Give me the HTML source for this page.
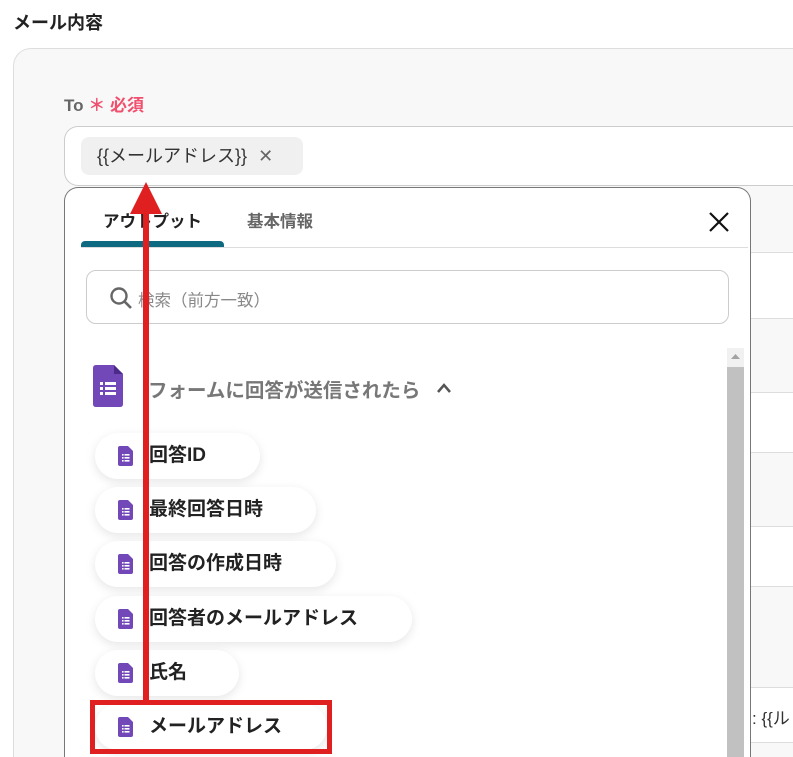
<!DOCTYPE html><html style="height:757px;overflow:hidden"><head><meta charset="utf-8"><style>
body{margin:0;width:793px;height:757px;overflow:hidden;background:#fff;font-family:"Liberation Sans","Noto Sans CJK JP",sans-serif;position:relative}
.a{position:absolute}
.pill{position:absolute;left:95px;height:46px;border-radius:23px;background:#fff;box-shadow:0 3px 10px rgba(0,0,0,.10);font-weight:bold;font-size:19px;color:#222;line-height:46px;padding-left:54px;box-sizing:border-box;white-space:nowrap}
.pill svg{position:absolute;left:23px;top:13px}
.row{position:absolute;left:750px;width:43px;border-top:1px solid #ddd}
</style></head><body>
<div class="a" style="left:13px;top:9px;font-weight:bold;font-size:18px;color:#222">メール内容</div>
<div class="a" style="left:13px;top:48px;width:780px;height:709px;border:1px solid #ddd;border-bottom:none;border-right:none;border-radius:18px 0 0 0;background:#f8f8f9;box-sizing:border-box"></div>
<div class="a" style="left:64px;top:91px;font-weight:bold;font-size:17px;color:#666">To <span style="color:#f0506e">＊ 必須</span></div>
<div class="a" style="left:64px;top:126px;width:729px;height:60px;border:1px solid #ccc;border-right:none;border-radius:14px 0 0 14px;background:#fff;box-sizing:border-box"></div>
<div class="a" style="left:81px;top:137px;width:222px;height:38px;border-radius:8px;background:#f0f0f0;font-size:18px;color:#333;line-height:38px;padding-left:16px;box-sizing:border-box;white-space:nowrap">{{メールアドレス}} <span style="color:#666;margin-left:6px">✕</span></div>
<div class="row" style="top:252px;height:66px;background:#fff"></div>
<div class="row" style="top:318px;height:74px;background:#f8f8f9"></div>
<div class="row" style="top:392px;height:60px;background:#fff"></div>
<div class="row" style="top:452px;height:74px;background:#f8f8f9"></div>
<div class="row" style="top:526px;height:60px;background:#fff"></div>
<div class="row" style="top:586px;height:100px;background:#f8f8f9"></div>
<div class="row" style="top:687px;height:55px;background:#fff"></div>
<div class="row" style="top:742px;height:14px;background:#f8f8f9"></div>
<div class="a" style="left:752px;top:704px;font-size:17px;color:#333">: {{ル</div>
<div class="a" style="left:64px;top:187px;width:687px;height:570px;border:1px solid #777;border-bottom:none;border-radius:14px 14px 0 0;background:#fff;box-sizing:border-box"></div>
<div class="a" style="left:103px;top:208px;font-weight:bold;font-size:16.5px;color:#222">アウトプット</div>
<div class="a" style="left:247px;top:208px;font-weight:bold;font-size:16.5px;color:#666">基本情報</div>
<div class="a" style="left:81px;top:247px;width:667px;border-top:1px solid #ddd"></div>
<div class="a" style="left:81px;top:241px;width:143px;height:6px;background:#0e6a80;border-radius:4px 4px 0 0"></div>
<svg class="a" style="left:707px;top:210px" width="24" height="24"><path d="M3 3L21 21M21 3L3 21" stroke="#111" stroke-width="2.2"/></svg>
<div class="a" style="left:86px;top:270px;width:643px;height:54px;border:1px solid #ccc;border-radius:10px;box-sizing:border-box"></div>
<svg class="a" style="left:109px;top:286px" width="24" height="24"><circle cx="10" cy="10" r="7.5" stroke="#666" stroke-width="2.4" fill="none"/><path d="M15.5 15.5L22 22" stroke="#666" stroke-width="2.6"/></svg>
<div class="a" style="left:138px;top:287px;font-size:16.5px;color:#888">検索（前方一致）</div>
<div class="a" style="left:727px;top:348px;width:17px;height:409px;background:#f1f1f1"></div>
<div class="a" style="left:727px;top:367px;width:17px;height:390px;background:#c1c1c1"></div>
<svg class="a" style="left:731px;top:354px" width="9" height="6"><path d="M0 5L4.5 0L9 5Z" fill="#a3a3a3"/></svg>
<svg class="a" style="left:93px;top:365px" width="30" height="42"><path d="M3 0H21L30 9V39Q30 42 27 42H3Q0 42 0 39V3Q0 0 3 0Z" fill="#7248b9"/><path d="M21 0V9H30Z" fill="#4b2a8a"/><g fill="#fff"><rect x="7" y="17" width="3" height="3"/><rect x="12" y="17" width="11" height="3"/><rect x="7" y="22" width="3" height="3"/><rect x="12" y="22" width="11" height="3"/><rect x="7" y="27" width="3" height="3"/><rect x="12" y="27" width="11" height="3"/></g></svg>
<div class="a" style="left:148px;top:374px;font-weight:bold;font-size:19.5px;color:#777;white-space:nowrap">フォームに回答が送信されたら</div>
<svg class="a" style="left:436px;top:382px" width="16" height="12"><path d="M2 10L8 3L14 10" stroke="#555" stroke-width="2.5" fill="none"/></svg>
<svg width="0" height="0" style="position:absolute"><defs><g id="d"><path d="M2 0H10L15 5V18Q15 20 13 20H2Q0 20 0 18V2Q0 0 2 0Z" fill="#7248b9"/><g fill="#fff"><rect x="4" y="8" width="1.6" height="1.6"/><rect x="6.5" y="8" width="5" height="1.6"/><rect x="4" y="11" width="1.6" height="1.6"/><rect x="6.5" y="11" width="5" height="1.6"/><rect x="4" y="14" width="1.6" height="1.6"/><rect x="6.5" y="14" width="5" height="1.6"/></g></g></defs></svg>
<div class="pill" style="top:433px;width:165px"><svg width="15" height="20"><use href="#d"/></svg>回答ID</div>
<div class="pill" style="top:487px;width:221px"><svg width="15" height="20"><use href="#d"/></svg>最終回答日時</div>
<div class="pill" style="top:541px;width:241px"><svg width="15" height="20"><use href="#d"/></svg>回答の作成日時</div>
<div class="pill" style="top:596px;width:317px"><svg width="15" height="20"><use href="#d"/></svg>回答者のメールアドレス</div>
<div class="pill" style="top:650px;width:144px"><svg width="15" height="20"><use href="#d"/></svg>氏名</div>
<div class="pill" style="top:704px;width:232px;height:46px"><svg width="15" height="20"><use href="#d"/></svg>メールアドレス</div>
<div class="a" style="left:90px;top:700px;width:242px;height:54px;border:5px solid #e02020;box-sizing:border-box"></div>
<div class="a" style="left:143px;top:210px;width:6px;height:492px;background:#e02020"></div>
<svg class="a" style="left:130px;top:182px" width="32" height="32"><path d="M16 0L32 32H0Z" fill="#e02020"/></svg>
</body></html>
